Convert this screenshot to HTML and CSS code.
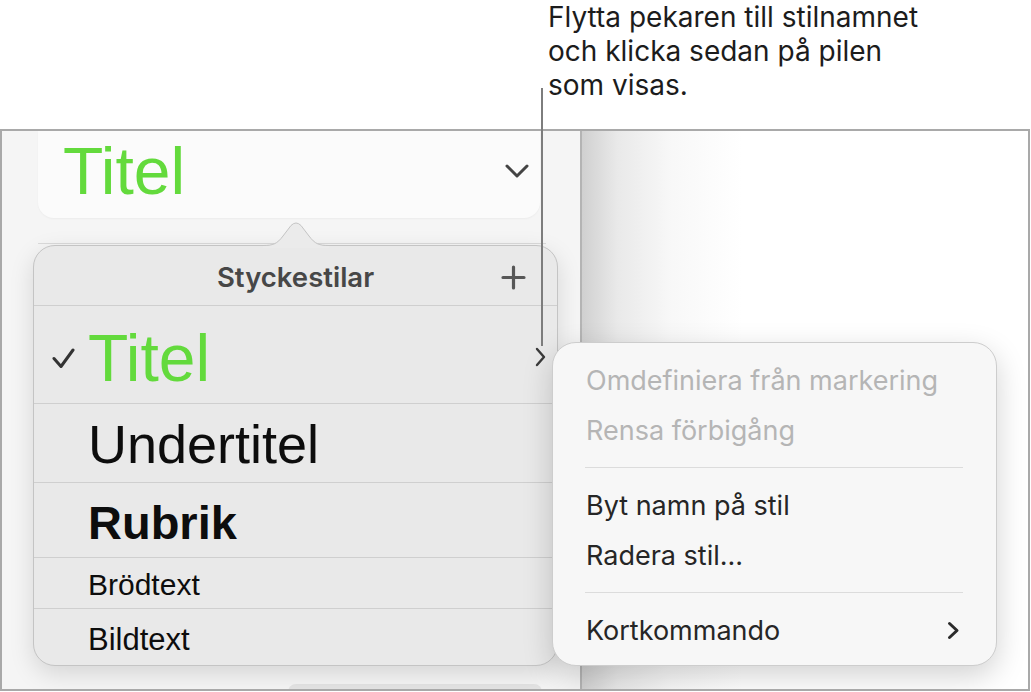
FILE: index.html
```html
<!DOCTYPE html>
<html lang="sv">
<head>
    <meta charset="UTF-8">
    <meta name="viewport" content="width=device-width, initial-scale=1.0">
    <title>Styckestilar</title>
    <link rel="stylesheet" href="styles.css">
</head>
<body>
    <div class="callout">
        <p class="callout-text">Flytta pekaren till stilnamnet<br>och klicka sedan på pilen<br>som visas.</p>
    </div>
    <div class="callout-line"></div>

    <div class="frame">
        <div class="sidebar">
            <div class="style-card">
                <span class="style-name">Titel</span>
                <svg class="card-chevron" width="24" height="14" viewBox="0 0 24 14">
                    <path d="M2 2 L12 12 L22 2" fill="none" stroke="#444" stroke-width="3" stroke-linecap="round" stroke-linejoin="round"/>
                </svg>
            </div>
            <div class="rule"></div>

            <div class="popover">
                <svg class="popover-arrow" width="66" height="26" viewBox="0 0 66 26">
                    <path d="M0 26 L0 23.5 C10 23.5 14 22 20 14 L28 3.5 Q33 -1.5 38 3.5 L46 14 C52 22 56 23.5 66 23.5 L66 26 Z" fill="#ebebeb"/>
                    <path d="M0 23.5 C10 23.5 14 22 20 14 L28 3.5 Q33 -1.5 38 3.5 L46 14 C52 22 56 23.5 66 23.5" fill="none" stroke="#c4c4c4" stroke-width="1"/>
                </svg>
                <div class="popover-head">
                    <span></span>
                    <span class="popover-title">Styckestilar</span>
                    <svg class="plus" width="25" height="25" viewBox="0 0 25 25">
                        <path d="M12.5 2 V23 M2 12.5 H23" stroke="#575757" stroke-width="3.2" stroke-linecap="round"/>
                    </svg>
                </div>
                <div class="style-row row-titel">
                    <span class="check">
                        <svg width="23" height="21" viewBox="0 0 23 21">
                            <path d="M2 10.5 L9 18.5 L21 2" fill="none" stroke="#333" stroke-width="3" stroke-linecap="round" stroke-linejoin="round"/>
                        </svg>
                    </span>
                    <span class="style-label">Titel</span>
                    <svg class="more" width="11" height="20" viewBox="0 0 11 20">
                        <path d="M2 2 L9 10 L2 18" fill="none" stroke="#3a3a3a" stroke-width="2.4" stroke-linecap="round" stroke-linejoin="round"/>
                    </svg>
                </div>
                <div class="style-row row-sub">
                    <span class="check"></span>
                    <span class="style-label">Undertitel</span>
                </div>
                <div class="style-row row-rubrik">
                    <span class="check"></span>
                    <span class="style-label">Rubrik</span>
                </div>
                <div class="style-row row-body">
                    <span class="check"></span>
                    <span class="style-label">Brödtext</span>
                </div>
                <div class="style-row row-caption">
                    <span class="check"></span>
                    <span class="style-label">Bildtext</span>
                </div>
            </div>
            <div class="peek"></div>
        </div>
        <div class="divider"></div>
        <div class="canvas"></div>

        <div class="submenu">
            <div class="menu-item disabled">Omdefiniera från markering</div>
            <div class="menu-item disabled">Rensa förbigång</div>
            <div class="menu-sep"></div>
            <div class="menu-item">Byt namn på stil</div>
            <div class="menu-item">Radera stil...</div>
            <div class="menu-sep"></div>
            <div class="menu-item">
                <span>Kortkommando</span>
                <svg width="13" height="19" viewBox="0 0 13 19">
                    <path d="M2.5 2.5 L10 9.5 L2.5 16.5" fill="none" stroke="#2b2b2b" stroke-width="3" stroke-linecap="round" stroke-linejoin="round"/>
                </svg>
            </div>
        </div>
    </div>
</body>
</html>
```

FILE: styles.css
```css
* {
    box-sizing: border-box;
    margin: 0;
    padding: 0;
}
body {
    width: 1031px;
    height: 692px;
    overflow: hidden;
    background-color: #fff;
    font-family: Inter, "Noto Sans", sans-serif;
    color: #1d1d1d;
}
.callout {
    height: 129px;
    padding-left: 548px;
}
.callout-text {
    font-size: 28px;
    line-height: 34px;
    color: #1c1c1c;
}
.callout-line {
    position: absolute;
    left: 541px;
    top: 88px;
    width: 2px;
    height: 258px;
    background-color: #7d7d7d;
    z-index: 5;
}
.frame {
    position: relative;
    display: flex;
    width: 1030px;
    height: 562px;
    border: 2px solid #a9a9a9;
    overflow: hidden;
}
.sidebar {
    width: 578px;
    background-color: #f5f5f5;
    overflow: hidden;
}
.divider {
    width: 2px;
    background-color: #b4b4b4;
}
.canvas {
    flex: 1;
    background: linear-gradient(90deg, #d0d0d0 0, #e9e9e9 35px, #f8f8f8 90px, #fff 160px);
}
.style-card {
    display: flex;
    align-items: center;
    justify-content: space-between;
    width: 502px;
    height: 87px;
    margin-left: 36px;
    padding: 0 11px 7px 25px;
    background-color: #fbfbfb;
    border-radius: 0 0 16px 16px;
    box-shadow: 0 1px 2px rgba(0, 0, 0, 0.04);
}
.style-name {
    font-family: "Liberation Sans", Arial, sans-serif;
    font-size: 66px;
    line-height: 66px;
    color: #63da3c;
}
.rule {
    width: 508px;
    height: 1px;
    margin: 25px 0 0 36px;
    background-color: #dadada;
}
.popover {
    position: relative;
    width: 525px;
    margin: 1px 0 0 31px;
    background-color: #e9e9e9;
    border: 1px solid #c4c4c4;
    border-radius: 22px;
    box-shadow: 0 8px 24px rgba(0, 0, 0, 0.13);
}
.popover-arrow {
    position: absolute;
    top: -24px;
    left: 229px;
}
.popover-head {
    display: grid;
    grid-template-columns: 1fr auto 1fr;
    align-items: center;
    height: 60px;
    padding: 3px 31px 0;
    border-bottom: 1px solid #cfcfcf;
}
.popover-title {
    font-size: 27.5px;
    font-weight: 600;
    color: #474747;
}
.plus {
    justify-self: end;
}
.style-row {
    display: flex;
    align-items: center;
    padding-left: 18px;
    border-bottom: 1px solid #cfcfcf;
    font-family: "Liberation Sans", Arial, sans-serif;
    color: #0d0d0d;
}
.style-label {
    line-height: 1;
}
.check {
    display: flex;
    width: 23px;
    margin-right: 13px;
}
.more {
    margin: 0 11px 3px auto;
}
.row-titel {
    height: 98px;
    padding-top: 7px;
    font-size: 66px;
    color: #63da3c;
}
.row-sub {
    height: 79px;
    padding-top: 2px;
    font-size: 54px;
}
.row-rubrik {
    height: 75px;
    padding-top: 4px;
    font-size: 47px;
    font-weight: bold;
}
.row-body {
    height: 51px;
    padding-top: 3px;
    font-size: 30px;
}
.row-caption {
    height: 56px;
    padding-top: 5px;
    font-size: 31px;
    border-bottom: none;
}
.peek {
    width: 254px;
    height: 12px;
    margin: 18px 0 0 286px;
    background-color: #e4e4e4;
    border-radius: 8px 8px 0 0;
}
.submenu {
    position: absolute;
    top: 211px;
    left: 550px;
    width: 445px;
    height: 324px;
    padding: 12px 0 10px;
    background-color: #f7f7f7;
    border: 1px solid #cdcdcd;
    border-radius: 24px;
    box-shadow: 0 10px 30px rgba(0, 0, 0, 0.18);
    z-index: 2;
}
.menu-item {
    display: flex;
    align-items: center;
    justify-content: space-between;
    height: 50px;
    padding: 0 36px 0 33px;
    font-size: 27px;
    color: #262626;
}
.menu-item.disabled {
    color: #b5b5b5;
}
.menu-sep {
    height: 1px;
    margin: 12px 33px 12px 32px;
    background-color: #dcdcdc;
}
```
